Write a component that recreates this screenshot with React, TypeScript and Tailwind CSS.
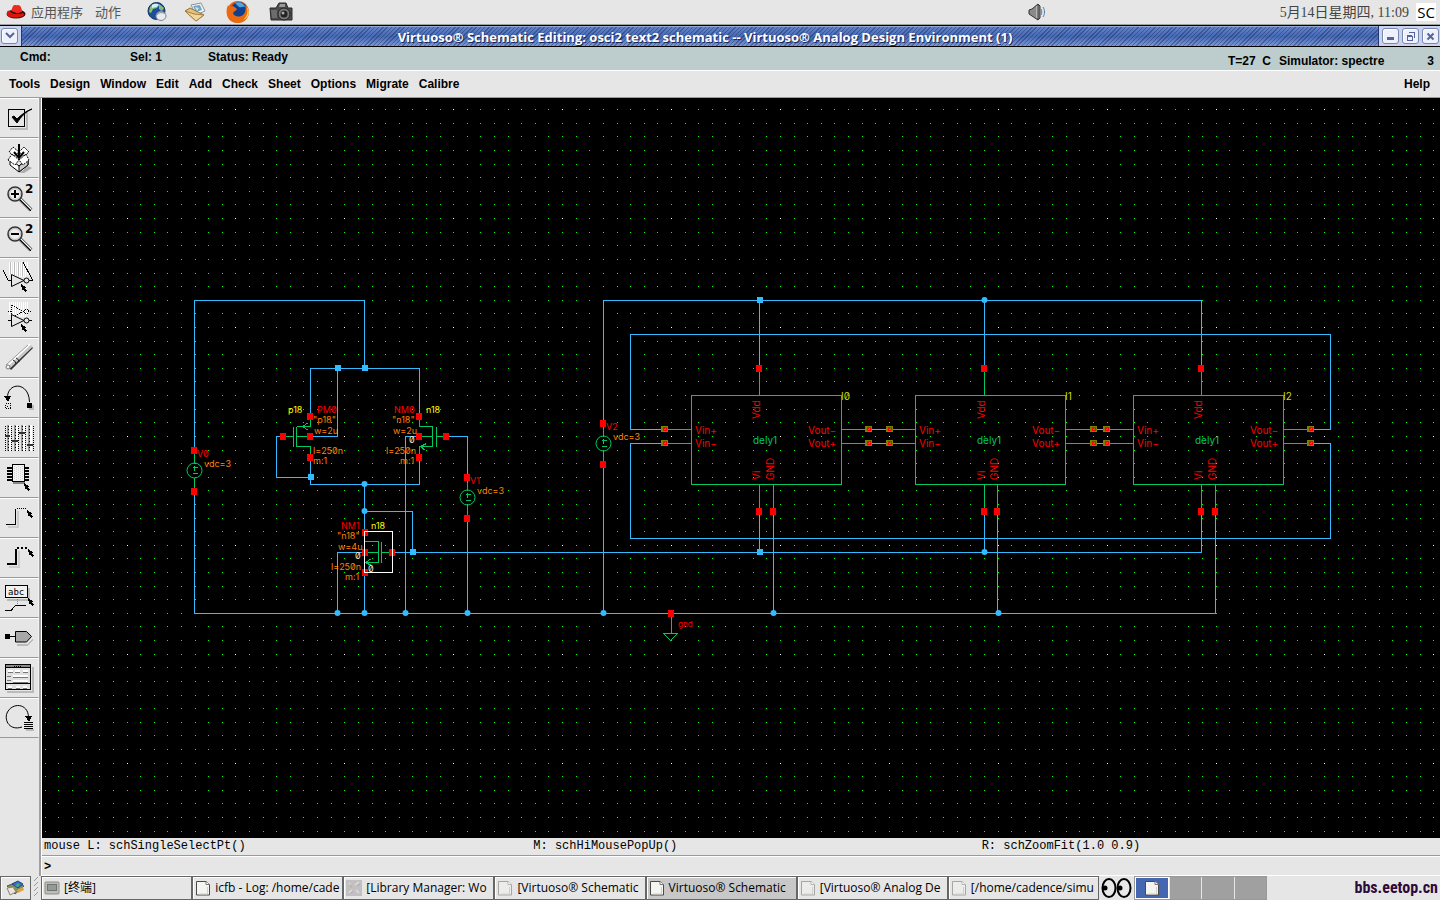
import type { ReactNode } from 'react'

const WIRE = '#33bbff'
const GREEN = '#00c864'
const RED = '#ff0000'
const ORANGE = '#ff8000'

const MENUS = ['Tools', 'Design', 'Window', 'Edit', 'Add', 'Check', 'Sheet', 'Options', 'Migrate', 'Calibre']

const TASKS = [
  { label: '[终端]', icon: 'terminal' },
  { label: 'icfb - Log: /home/cade', icon: 'page' },
  { label: '[Library Manager: Wo', icon: 'noise' },
  { label: '[Virtuoso® Schematic', icon: 'faded' },
  { label: 'Virtuoso® Schematic', icon: 'page', active: true },
  { label: '[Virtuoso® Analog De', icon: 'faded' },
  { label: '[/home/cadence/simu', icon: 'faded' },
]

export default function App() {
  return (
    <div className="flex h-screen flex-col overflow-hidden bg-[#e6e6e6] font-['Liberation_Sans',Arial,sans-serif] text-black">
      <DesktopPanel />
      <TitleBar />

      {/* Status line */}
      <div className="flex h-[23px] shrink-0 bg-[#bdcccc] pr-[6px] pl-5 text-[12px] leading-[20px] font-bold">
        <span className="w-[110px]">Cmd:</span>
        <span className="w-[78px]">Sel: 1</span>
        <span>Status: Ready</span>
        <div className="ml-auto flex pt-1">
          <span className="mr-2">T=27&nbsp; C</span>
          <span className="mr-[43px]">Simulator: spectre</span>
          <span>3</span>
        </div>
      </div>

      {/* Menu bar */}
      <nav className="flex h-7 shrink-0 items-center gap-[10px] border-t border-b border-t-white border-b-[#9a9a9a] pr-[10px] pl-[9px] text-[12px] font-bold">
        {MENUS.map((m) => (
          <button key={m}>{m}</button>
        ))}
        <button className="ml-auto">Help</button>
      </nav>

      <div className="flex min-h-0 flex-1">
        <aside className="w-[42px] shrink-0 border-r border-white">
          <div className="h-full border-r-2 border-[#a0a0a0]">
            {TOOLS.map((t) => (
              <button
                key={t.name}
                aria-label={t.name}
                className="block h-10 w-full border-t border-r border-b border-t-white border-r-[#f2f2f2] border-b-[#999]"
              >
                <svg width="38" height="38" viewBox="0 1 38 38" shapeRendering="crispEdges" fill="none" stroke="#000">
                  {t.art}
                </svg>
              </button>
            ))}
          </div>
        </aside>

        <main className="flex min-w-0 flex-1 flex-col">
          <div className="min-h-0 flex-1 overflow-hidden bg-black">
            <Schematic />
          </div>
          <div className="grid h-[18px] shrink-0 grid-cols-[490fr_449fr_459fr] border-b border-[#9a9a9a] pl-[2px] font-['Liberation_Mono','Courier_New',monospace] text-[12px] leading-[17px]">
            <span>mouse L: schSingleSelectPt()</span>
            <span>M: schHiMousePopUp()</span>
            <span>R: schZoomFit(1.0 0.9)</span>
          </div>
          <div className="h-5 shrink-0 border-t border-b border-white pl-[2px] font-['Liberation_Mono','Courier_New',monospace] text-[12px] leading-[20px] font-bold">
            &gt;
          </div>
        </main>
      </div>

      <Taskbar />
    </div>
  )
}

function DesktopPanel() {
  return (
    <header className="flex h-[25px] shrink-0 items-center border-b border-[#9ca39c] pr-1 pl-[6px] font-['Noto_Sans_CJK_SC',sans-serif] text-[13px] text-[#555]">
      <svg width="20" height="16" viewBox="0 0 20 16">
        <ellipse cx="10" cy="10" rx="9.5" ry="4.5" fill="#3a0605" />
        <path d="M1 8c1-2 3-1 4 0 3 2 8 3 11 1 2 0 3 2 1 3-5 3-14 2-16-1z" fill="#d9150e" />
        <path d="M5 7l2-5c2-2 3 0 5-1 3 0 4 4 4 7-3 2-8 1-11-1z" fill="#ee2a20" />
        <path d="M5 7c3 2 8 3 11 1v1c-4 2-9 1-11-1z" fill="#111" />
      </svg>
      <button className="ml-[5px]">应用程序</button>
      <button className="ml-3">动作</button>
      <button aria-label="Web browser" className="ml-[26px]">
        <svg width="20" height="20" viewBox="0 0 20 20">
          <circle cx="9.500" cy="9" r="8.500" fill="#1d4e9a" stroke="#17325f" />
          <path d="M3 5c3-4 7-4 9-2l-2 3-4 1-2 4-2-1zM12 2l5 4-2 3-3-2z" fill="#8ac46a" />
          <path d="M5 3c3-2 6-1 7 0L9 5 5 6z" fill="#d6efff" />
          <ellipse cx="14" cy="14" rx="5" ry="4.500" fill="#e8eaf0" stroke="#7d8594" />
          <path d="M10 13c2-3 6-3 8-1M14 10V6" stroke="#8b93a3" fill="none" />
        </svg>
      </button>
      <button aria-label="Mail" className="ml-[17px]">
        <svg width="22" height="20" viewBox="0 0 22 20">
          <path d="M7 3l10-2 4 8-9 4z" fill="#f2f4f4" stroke="#8b9298" />
          <path d="M9 4l7-1 2 5-6 2z" fill="#6fa5c9" />
          <path d="M11 5l4 1-2 3z" fill="#cfe6d8" />
          <path d="M1 9l5-3 14 7-8 6z" fill="#e6c07c" stroke="#96703a" />
          <path d="M1 9l9 3 10 1-8 6z" fill="#f2d79c" stroke="#a5803f" />
        </svg>
      </button>
      <button aria-label="Firefox" className="ml-[20px]">
        <svg width="24" height="24" viewBox="0 0 24 24">
          <circle cx="12" cy="12" r="11" fill="#e2600c" />
          <circle cx="13" cy="10" r="8" fill="#123f8c" />
          <path d="M9 3c4-2 9 0 10 4-3-1-3 1-6 0z" fill="#4fa6dd" />
          <path d="M2 5c1 2 3 2 5 1l4 3c-1 2-3 2-4 4 1 4 7 5 11 1 2-3 2-6 1-9 4 4 5 11 0 15-5 4-13 4-17-2-2-4-2-9 0-13z" fill="#ea6a14" />
          <path d="M20 6c3 5 1 11-3 14 6-2 8-9 3-14z" fill="#ffd84a" />
        </svg>
      </button>
      <button aria-label="Screenshot" className="ml-[19px]">
        <svg width="24" height="20" viewBox="0 0 24 20">
          <path d="M1 6h6l3-5h7l2 5h4v12H2z" fill="#4b4b4b" stroke="#2a2a2a" />
          <path d="M11 2h5v3h-6z" fill="#999" />
          <path d="M2 8h6v8H3z" fill="#6c6c6c" />
          <circle cx="15" cy="12" r="6" fill="#777" stroke="#222" />
          <circle cx="15" cy="12" r="3.500" fill="#222" />
          <circle cx="14" cy="11" r="1.500" fill="#aaa" />
        </svg>
      </button>
      <button aria-label="Volume" className="mr-[234px] ml-auto">
        <svg width="18" height="18" viewBox="0 0 18 18" fill="none">
          <path d="M1 7l3-1 6-5 2 2v12l-2 2-6-4-3-2z" fill="#8a8a8a" stroke="#333" />
          <path d="M9 3v12" stroke="#ddd" />
          <path d="M10 2v14" stroke="#444" />
          <path d="M13 6c1 2 1 4 0 6M15 4c2 3 2 7 0 10" stroke="#4d7fae" />
        </svg>
      </button>
      <span className="font-['Liberation_Serif','Noto_Sans_CJK_SC',serif] text-[14px] whitespace-nowrap text-[#444]">
        5月14日星期四, 11:09
      </span>
      <button className="ml-[7px] h-[18px] w-5 bg-white font-['Open_Sans',sans-serif] text-[15px] leading-[18px] text-black">SC</button>
    </header>
  )
}

function TitleBar() {
  const box =
    'flex h-4 w-[17px] items-center justify-center rounded-[3px] border border-[#7986b0] bg-[#eef1fb] shadow-[inset_1px_1px_0_#fff]'
  return (
    <div className="flex h-[22px] shrink-0 border-t border-b border-black bg-[#c9d3ee]">
      <div className="flex w-[22px] items-center border-r border-[#26366e] pl-px">
        <button aria-label="Window menu" className={box}>
          <svg width="10" height="8" viewBox="0 0 10 8">
            <path d="M1 1l4 4 4-4" fill="none" stroke="#55659b" strokeWidth="2" />
          </svg>
        </button>
      </div>
      <h1 className="flex-1 truncate border-t border-[#93a9dc] bg-[repeating-linear-gradient(135deg,rgba(20,36,90,0.4)_0px,rgba(20,36,90,0.4)_1px,transparent_1px,transparent_3px),linear-gradient(#6483c8,#4669b4_50%,#7c98d4)] pl-[10px] text-center font-['Open_Sans','Noto_Sans',sans-serif] text-[13px] leading-[20px] font-bold text-white [text-shadow:1px_1px_0_#1b2855]">
        Virtuoso® Schematic Editing: osci2 text2 schematic -- Virtuoso® Analog Design Environment (1)
      </h1>
      <div className="flex items-center gap-[3px] border-l border-[#26366e] pr-px pl-[3px]">
        <button aria-label="Minimize" className={box}>
          <svg width="9" height="9" viewBox="0 0 9 9" shapeRendering="crispEdges">
            <path d="M1 5h7v3H1z" fill="#55659b" />
          </svg>
        </button>
        <button aria-label="Restore" className={box}>
          <svg width="9" height="9" viewBox="0 0 9 9" shapeRendering="crispEdges" fill="none" stroke="#55659b">
            <path d="M3 .5h5.500V6M1 4.500h5v4H1zM1 3.500h5" />
          </svg>
        </button>
        <button aria-label="Close" className={box}>
          <svg width="9" height="9" viewBox="0 0 9 9">
            <path d="M1.500 1.500l6 6m0-6l-6 6" stroke="#55659b" strokeWidth="2" />
          </svg>
        </button>
      </div>
    </div>
  )
}

/* ---------- toolbar ---------- */

function Cursor({ x, y }: { x: number; y: number }) {
  return <path transform={`translate(${x} ${y})`} d="M0 0l5 3-1 1 2 3-2 1-2-3-1 1z" fill="#000" stroke="none" />
}

function Lens({ plus }: { plus?: boolean }) {
  return (
    <g shapeRendering="auto">
      <path d="M20 21l11 11" stroke="#777" strokeWidth="4" />
      <path d="M20 22l11 11" stroke="#000" strokeWidth="1" />
      <path d="M21 21l10 10" stroke="#fff" strokeWidth="1" />
      <circle cx="15" cy="16" r="7" fill="#eee" stroke="#333" strokeWidth="1.500" />
      <circle cx="15" cy="16" r="5.500" stroke="#bbb" />
      <path d={plus ? 'M11 16h8M15 12v8' : 'M11 16h8'} strokeWidth="2" />
      <text x="25" y="15" stroke="none" fill="#000" className="font-['DejaVu_Sans',sans-serif] text-[12px] font-bold">
        2
      </text>
    </g>
  )
}

const STRIPES = 'M9.500 4v13M11.500 4v12M13.500 4v13M15.500 4v14M17.500 4v14M19.500 4v15M21.500 4v15M23.500 4v15M25.500 4v15M27.500 4v13'

const TOOLS: { name: string; art: ReactNode }[] = [
  {
    name: 'Check and Save',
    art: (
      <>
        <path d="M10 30.500h17V14" stroke="#bbb" strokeWidth="2" />
        <rect x="8.500" y="11.500" width="16" height="17" />
        <path d="M8 11.500h17M8.500 11v18" />
        <path d="M12 19l5 6c4-6 8-11 15-14-6 2-11 6-15 10l-3-3z" fill="#000" shapeRendering="auto" />
      </>
    ),
  },
  {
    name: 'Save',
    art: (
      <g shapeRendering="auto">
        <path d="M20 35l8-7 4 2-8 5z" fill="#aaa" stroke="none" />
        <path d="M10 21l9 7 9-7v6l-9 7-9-7z" fill="#fff" />
        <path d="M19 28l9-7v6l-9 7z" fill="#ccc" />
        <path d="M8 22l4-6 7 6-4 5zM19 22l7-6 3 6-6 5zM9 14l4-5 6 5-5 4zM19 14l5-5 5 5-5 4z" fill="#fff" strokeDasharray="2 1" />
        <path d="M19 6v13" strokeWidth="2" />
        <path d="M14 14l5 6 5-6" strokeWidth="2" />
      </g>
    ),
  },
  { name: 'Zoom In', art: <Lens plus /> },
  { name: 'Zoom Out', art: <Lens /> },
  {
    name: 'Stretch',
    art: (
      <>
        <path d={STRIPES} stroke="#fff" />
        <path d="M10.500 4v12M14.500 4v13M18.500 4v14M22.500 4v14" stroke="#bbb" />
        <path d="M3 12l5 10h3M23 4l9 17v1h-3" />
        <path d="M11.500 16.500v12L24 22.500z" fill="#e6e6e6" strokeWidth="1" shapeRendering="auto" />
        <circle cx="26.500" cy="22.500" r="2.500" shapeRendering="auto" fill="#e6e6e6" />
        <Cursor x={21} y={26} />
      </>
    ),
  },
  {
    name: 'Copy',
    art: (
      <>
        <path d={STRIPES} stroke="#fff" />
        <path d="M8 13h4M11.500 7v12L24 13.500zM28 13h4" strokeDasharray="1 1" />
        <circle cx="26.500" cy="13.500" r="2.500" strokeDasharray="1 1" />
        <path d="M8 22h3M29 22h3" />
        <path d="M11.500 16.500v12L24 22.500z" fill="#e6e6e6" shapeRendering="auto" />
        <circle cx="26.500" cy="22.500" r="2.500" shapeRendering="auto" fill="#e6e6e6" />
        <Cursor x={21} y={26} />
      </>
    ),
  },
  {
    name: 'Delete',
    art: (
      <g shapeRendering="auto">
        <path d="M10 31L32 9" stroke="#333" strokeWidth="3" />
        <path d="M8 29L31 7" stroke="#c8c8c8" strokeWidth="5" />
        <path d="M8 27L30 6" stroke="#fff" strokeWidth="2" />
        <path d="M6 27L28 7" stroke="#999" />
        <path d="M13 22q3 1 3 4M16 20q3 1 3 4" stroke="#222" />
        <circle cx="8" cy="29" r="2" fill="#f4f4f4" stroke="#777" />
      </g>
    ),
  },
  {
    name: 'Undo',
    art: (
      <>
        <path d="M7.500 20C7 4 29 3 29.500 24" shapeRendering="auto" />
        <path d="M4 18h7l-3 6z" fill="#000" stroke="none" />
        <rect x="5.500" y="25.500" width="5" height="5" strokeDasharray="1 1" />
        <path d="M7 28h2" strokeDasharray="1 1" />
        <rect x="29" y="27" width="5" height="5" fill="#bbb" stroke="none" />
        <rect x="27" y="25" width="5" height="5" fill="#000" stroke="none" />
      </>
    ),
  },
  {
    name: 'Property',
    art: (
      <>
        <path d="M9.500 7v26M16.500 7v26M23.500 7v26M30.500 7v26" stroke="#fff" strokeWidth="2" />
        <path d="M7.500 7v26M14.500 7v26M21.500 7v26M28.500 7v26" stroke="#999" strokeWidth="2" />
        <path d="M5.500 8v25M11.500 8v25M18.500 8v25M25.500 8v25M33.500 8v25" strokeDasharray="1 1" />
        <path d="M8.500 8v25M15.500 8v25M22.500 8v25M29.500 8v25" strokeDasharray="1 2" />
        <path d="M5 18h5M12 23h6M19 15h6M27 27h6" strokeWidth="2" stroke="#333" />
      </>
    ),
  },
  {
    name: 'Instance',
    art: (
      <>
        <path d="M7 9.500h5M7 12.500h5M7 15.500h5M7 18.500h5M7 21.500h5M25 9.500h4M25 12.500h4M25 15.500h4M25 18.500h4M25 21.500h4" strokeWidth="2" />
        <rect x="12.500" y="6.500" width="12" height="17" fill="#f4f4f4" />
        <path d="M14.500 8v14M16.500 9v13M18.500 8v14M20.500 9v13M22.500 8v14" stroke="#d4d4d4" strokeDasharray="1 1" />
        <path d="M13 24.500h12" stroke="#888" strokeWidth="2" />
        <Cursor x={24} y={25} />
      </>
    ),
  },
  {
    name: 'Wire Narrow',
    art: (
      <>
        <path d="M8 28.500h10V13" stroke="#ccc" strokeWidth="2" />
        <path d="M6 26.500h9.500V11" />
        <path d="M17 10.500h10" strokeDasharray="1 1" />
        <Cursor x={27} y={12} />
      </>
    ),
  },
  {
    name: 'Wire Wide',
    art: (
      <>
        <path d="M9 28.500h10V13" stroke="#ccc" strokeWidth="2" />
        <path d="M7 26h9V11" strokeWidth="2" />
        <path d="M17 10h11" strokeWidth="2" strokeDasharray="2 2" />
        <Cursor x={28} y={11} />
      </>
    ),
  },
  {
    name: 'Wire Name',
    art: (
      <>
        <path d="M7 21.500h22V10" stroke="#bbb" strokeWidth="2" />
        <rect x="5.500" y="7.500" width="22" height="12" fill="#f0f0f0" />
        <text x="8" y="17" stroke="none" fill="#000" className="font-['DejaVu_Sans_Mono',monospace] text-[9px]">
          abc
        </text>
        <path d="M17.500 21v5" stroke="#888" strokeDasharray="1 1" />
        <path d="M5 32.500h6l5-5.500h10" />
        <Cursor x={28} y={20} />
      </>
    ),
  },
  {
    name: 'Pin',
    art: (
      <>
        <path d="M17 26.500h11l5-5" stroke="#bbb" strokeWidth="2" />
        <rect x="5" y="16" width="5" height="5" fill="#000" stroke="none" />
        <path d="M10 18.500h5" />
        <path d="M15.500 13.500h11l5 5-5 5.500h-11z" fill="#a8a8a8" shapeRendering="auto" />
      </>
    ),
  },
  {
    name: 'Cmd Options',
    art: (
      <>
        <path d="M7 33.500h26V9" stroke="#bbb" strokeWidth="2" />
        <rect x="5.500" y="6.500" width="25" height="25" fill="#e0e0e0" />
        <path d="M6 8h24" stroke="#888" strokeWidth="2" />
        <path d="M14 8h7" strokeDasharray="1 1" />
        <path d="M6 9.500h24M6 25.500h24" />
        <path d="M8 12.500h5M15 12.500h5M23 12.500h5M13 17.500h15M13 22.500h15M8 28.500h4M16 28.500h4M23 28.500h4" stroke="#fff" strokeWidth="2" />
        <path d="M8 14.500h5M15 14.500h5M23 14.500h5M13 19.500h15M13 24.500h15M8 30.500h4M16 30.500h4M23 30.500h4M7 18.500h4M7 22.500h4" stroke="#777" />
      </>
    ),
  },
  {
    name: 'Repeat',
    art: (
      <>
        <path d="M22 29C10 33 4 23 7 15 12 4 28 5 28.500 19" shapeRendering="auto" />
        <path d="M25 18h7l-3 6z" fill="#000" stroke="none" />
        <path d="M26 31.500h8" stroke="#bbb" strokeWidth="2" />
        <path d="M24 24.500h9M24 26.500h9M24 28.500h9M24 30.500h9" />
      </>
    ),
  },
]

/* ---------- schematic ---------- */

const PITCH = 13.6125

function gridPath(major: boolean) {
  let d = ''
  for (let i = -14; i < 160; i++) {
    for (let j = -16; j < 80; j++) {
      if ((i % 8 === 0 && j % 8 === 0) !== major) continue
      d += `M${Math.round(235.4 + PITCH * i)} ${Math.round(327 + PITCH * j)}h1v1h-1z`
    }
  }
  return d
}

const MINOR_DOTS = gridPath(false)
const MAJOR_DOTS = gridPath(true)

const WIRES = [
  'M194 450V300H364V368M310 416V368H419V416M337 368V436H310M283 436H276V477H310M310 457V484H419V457',
  'M419 436H405V613M446 436H467V477M467 518V613M364 484V532M364 511H412V552M392 552H1201M364 552H337V613M364 572V613',
  'M194 491V613H1215M603 423V300H1201V368M603 463V613',
  'M664 429H630V334H1330V429H1310M664 443H630V538H1330V443H1310',
  'M759 300V368M984 300V368M759 511V552M984 511V552M1201 511V552M773 511V613M997 511V613M1215 511V613',
  'M868 429H889M868 443H889M1093 429H1106M1093 443H1106',
]

const SQUARE_NODES = [[337, 368], [364, 368], [310, 477], [412, 552], [759, 300], [759, 552]]
const ROUND_NODES = [
  [364, 484], [364, 511], [337, 613], [364, 613], [405, 613], [467, 613], [603, 613], [773, 613], [998, 613],
  [984, 300], [984, 552],
]

function Pins({ at }: { at: number[][] }) {
  return (
    <>
      {at.map(([x, y]) => (
        <rect key={`${x}-${y}`} x={x - 3} y={y - 3} width="6" height="7" fill={RED} />
      ))}
    </>
  )
}

function Label({ x, y, fill, children }: { x: number; y: number; fill: string; children: string }) {
  return (
    <text x={x} y={y} fill={fill} className="text-[9px]">
      {children}
    </text>
  )
}

function Source({ x, y, name }: { x: number; y: number; name: string }) {
  return (
    <>
      <g fill="none" stroke={GREEN} transform="translate(.5 .5)">
        <path d={`M${x} ${y - 20}v13M${x} ${y + 7}v14M${x - 2} ${y - 3}h5M${x} ${y - 5}v5M${x - 2} ${y + 3}h5`} />
        <circle cx={x} cy={y} r="7.500" shapeRendering="auto" />
      </g>
      <Pins at={[[x, y - 20], [x, y + 21]]} />
      <Label x={x + 3} y={y - 13} fill={RED}>{name}</Label>
      <Label x={x + 10} y={y - 3} fill={ORANGE}>vdc=3</Label>
    </>
  )
}

function PortPin({ x, y }: { x: number; y: number }) {
  return (
    <>
      <rect x={x - 3} y={y - 3} width="7" height="6" fill="#808000" />
      <path d={`M${x - 1} ${y - 2}h3v3h-3zM${x} ${y - 1}l1 1`} fill="none" stroke={RED} transform="translate(.5 .5)" />
    </>
  )
}

function Delay({ x, name, vdd, gnd, inputX, outputX }: { x: number; name: string; vdd: number; gnd: number; inputX: number; outputX: number }) {
  return (
    <>
      <path
        d={`M${x} 395h150v89h-150zM${vdd} 368V395M${vdd} 484V511M${gnd} 484V511M${inputX} 429H${x}M${inputX} 443H${x}M${x + 150} 429H${outputX}M${x + 150} 443H${outputX}`}
        fill="none"
        stroke={GREEN}
        transform="translate(.5 .5)"
      />
      <Pins at={[[vdd, 368], [vdd, 511], [gnd, 511]]} />
      {[429, 443].map((y) => (
        <g key={y}>
          <PortPin x={inputX} y={y} />
          <PortPin x={outputX} y={y} />
        </g>
      ))}
      <g fill={RED} className="text-[10px]">
        <text x={x + 4} y="434">Vin+</text>
        <text x={x + 4} y="447">Vin−</text>
        <text x={x + 145} y="434" textAnchor="end">Vout−</text>
        <text x={x + 145} y="447" textAnchor="end">Vout+</text>
        <text transform={`translate(${vdd + 1} 419) rotate(-90)`}>Vdd</text>
        <text transform={`translate(${vdd + 1} 480) rotate(-90)`}>Vi</text>
        <text transform={`translate(${gnd + 1} 480) rotate(-90)`}>GND</text>
      </g>
      <text x={x + 62} y="444" fill={GREEN} className="text-[10px]">dely1</text>
      <text x={x + 150} y="400" fill="#d8d800" className="text-[10px]">{name}</text>
    </>
  )
}

function Schematic() {
  return (
    <svg className="block h-full w-full font-['Inter','Liberation_Sans',sans-serif] slashed-zero" shapeRendering="crispEdges">
      <g transform="translate(-42 -98)">
        <path d={MINOR_DOTS} fill="#00ff00" />
        <path d={MAJOR_DOTS} fill="#fff" />

        <path d={WIRES.join('')} fill="none" stroke={WIRE} transform="translate(.5 .5)" />

        {/* MOS bodies */}
        <g fill="none" stroke={GREEN} transform="translate(.5 .5)">
          <path d="M283 436H293M293 426V446M296 426V446M310 416V426H296M296 436H310M296 446H310V457M308 422L302 426L308 430" />
          <path d="M446 436H436M436 426V446M432 426V446M419 416V426H432M432 436H419M432 446H419V457M426 443L420 446L425 450" />
          <path d="M392 552H381M381 541V562M378 541V562M364 532V541H378M378 552H364M378 562H364V572M371 558L365 562L371 565" />
        </g>
        <Pins
          at={[
            [310, 416], [310, 436], [310, 457], [283, 436],
            [419, 416], [419, 436], [419, 457], [446, 436],
            [365, 532], [365, 552], [365, 572], [392, 552],
          ]}
        />
        <rect x="364.500" y="531.500" width="28" height="41" fill="none" stroke="#fff" />

        {SQUARE_NODES.map(([x, y]) => (
          <rect key={`${x}-${y}`} x={x - 2} y={y - 3} width="6" height="6" fill={WIRE} />
        ))}
        {ROUND_NODES.map(([x, y]) => (
          <circle key={`${x}-${y}`} cx={x + 0.5} cy={y} r="3" fill={WIRE} shapeRendering="auto" />
        ))}

        <Source x={194} y={470} name="V0" />
        <Source x={467} y={497} name="V1" />
        <Source x={603} y={443} name="V2" />

        <Label x={288} y={413} fill="#ffff00">p18</Label>
        <Label x={317} y={413} fill={RED}>PM0</Label>
        <Label x={313} y={423} fill={ORANGE}>"p18"</Label>
        <Label x={314} y={434} fill={ORANGE}>w=2u</Label>
        <Label x={313} y={454} fill={ORANGE}>l=250n</Label>
        <Label x={313} y={464} fill={ORANGE}>m:1</Label>

        <Label x={394} y={413} fill={RED}>NM0</Label>
        <Label x={426} y={413} fill="#ffff00">n18</Label>
        <Label x={392} y={423} fill={ORANGE}>"n18"</Label>
        <Label x={393} y={434} fill={ORANGE}>w=2u</Label>
        <Label x={409} y={443} fill="#ffe8c8">0</Label>
        <Label x={386} y={454} fill={ORANGE}>l=250n</Label>
        <Label x={400} y={464} fill={ORANGE}>m:1</Label>

        <Label x={341} y={529} fill={RED}>NM1</Label>
        <Label x={371} y={529} fill="#ffff00">n18</Label>
        <Label x={337} y={539} fill={ORANGE}>"n18"</Label>
        <Label x={338} y={550} fill={ORANGE}>w=4u</Label>
        <Label x={355} y={559} fill="#ffe8c8">0</Label>
        <Label x={331} y={570} fill={ORANGE}>l=250n</Label>
        <Label x={368} y={572} fill="#ffe8c8">0</Label>
        <Label x={345} y={580} fill={ORANGE}>m:1</Label>

        <Delay x={691} name="I0" vdd={759} gnd={773} inputX={664} outputX={868} />
        <Delay x={915} name="I1" vdd={984} gnd={997} inputX={889} outputX={1093} />
        <Delay x={1133} name="I2" vdd={1201} gnd={1215} inputX={1106} outputX={1310} />

        <path d="M671 613V633M663 633H677L670 640Z" fill="none" stroke={GREEN} transform="translate(.5 .5)" />
        <Pins at={[[671, 613]]} />
        <text x="678" y="627" fill={RED} className="text-[8px]">gnd</text>
      </g>
    </svg>
  )
}

/* ---------- bottom panel ---------- */

function TaskIcon({ kind }: { kind: string }) {
  if (kind === 'terminal') {
    return (
      <svg width="16" height="16" viewBox="0 0 16 16" className="shrink-0">
        <rect x="1" y="2" width="14" height="12" rx="1" fill="#bdbdb8" stroke="#8c8c88" />
        <rect x="3.500" y="4.500" width="9" height="6" fill="#969a96" stroke="#6f736f" />
      </svg>
    )
  }
  if (kind === 'noise') {
    return (
      <svg width="16" height="16" viewBox="0 0 16 16" className="shrink-0">
        <path d="M0 0h16v16H0z" fill="#c2c0c0" />
        <path d="M3 13l3-3M9 5l4-3M10 10l3 3M3 3l1 1" stroke="#d8d6d6" strokeWidth="2" />
        <path d="M4 14l3-3M11 6l3-2M4 6l2 1" stroke="#b0a8a8" />
      </svg>
    )
  }
  const faded = kind === 'faded'
  return (
    <svg width="16" height="16" viewBox="0 0 16 16" className="shrink-0">
      <path d="M1.500 1.500h9.500l3.500 3v10.500h-13z" fill={faded ? '#ececea' : '#f4f4f0'} stroke={faded ? '#a6a6a6' : '#4a4a4a'} />
      <path d="M11 1.500v3h3.500" fill="#fff" stroke={faded ? '#b5b5b5' : '#777'} />
      <path d="M12.500 7v7H4" fill="none" stroke="#d0d0cc" />
    </svg>
  )
}

function Taskbar() {
  return (
    <footer className="flex h-[24px] shrink-0 items-stretch font-['Open_Sans','Noto_Sans_CJK_SC',sans-serif] text-[12px]">
      <button
        aria-label="Show desktop"
        className="flex w-[31px] shrink-0 items-center justify-center border border-[#666] shadow-[inset_1px_1px_0_#fff]"
      >
        <svg width="20" height="16" viewBox="0 0 20 16">
          <path d="M1 6l10-4 7 4-9 8z" fill="#8d8a60" stroke="#5c5b48" />
          <path d="M6 4l6-3 5 3-5 4z" fill="#2f6fd0" stroke="#28457b" />
          <path d="M9 6l3-3 2 2-2 2z" fill="#35b36e" />
          <path d="M1 8l6-1 3 5-6 3z" fill="#e8e4d8" stroke="#8a8578" />
          <path d="M11 10l6-3 1 3-6 3z" fill="#d9a34c" />
        </svg>
      </button>
      <svg width="10" height="24" viewBox="0 0 10 24" className="shrink-0" stroke="#999">
        <path d="M3 5l4-4M3 10l4-4M3 15l4-4M3 20l4-4" />
      </svg>
      <div className="flex max-w-[1058px] min-w-0 flex-1">
        {TASKS.map((t) => (
          <button
            key={t.label}
            className={`flex min-w-0 flex-1 items-center gap-1 overflow-hidden border border-[#666] pl-[2px] text-left whitespace-nowrap shadow-[inset_1px_1px_0_#fff] ${t.active ? 'bg-[#c8c8c8]' : 'bg-[#e6e6e6]'}`}
          >
            <TaskIcon kind={t.icon} />
            {t.label}
          </button>
        ))}
      </div>
      <svg width="34" height="24" viewBox="0 0 34 24" className="ml-[1px] shrink-0">
        <ellipse cx="9" cy="12" rx="6.500" ry="9" fill="#e8e8e8" stroke="#000" strokeWidth="2" />
        <ellipse cx="24" cy="12" rx="6.500" ry="9" fill="#e8e8e8" stroke="#000" strokeWidth="2" />
        <circle cx="5" cy="12" r="2.500" />
        <circle cx="20" cy="12" r="2.500" />
      </svg>
      <div className="flex w-[133px] shrink-0 gap-px border border-[#999] bg-[#e6e6e6]">
        <button aria-label="Workspace 1" className="flex flex-1 items-center justify-center border border-white bg-[#4566b0]">
          <TaskIcon kind="page" />
        </button>
        <button aria-label="Workspace 2" className="flex-1 bg-[#a0a0a0]" />
        <button aria-label="Workspace 3" className="flex-1 bg-[#a0a0a0]" />
        <button aria-label="Workspace 4" className="flex-1 bg-[#a0a0a0]" />
      </div>
      <span className="mr-[2px] ml-auto font-['Liberation_Sans_Narrow','Roboto_Condensed','Liberation_Sans',sans-serif] text-[16px] leading-[23px] font-bold text-[#2d0a3c]">
        bbs.eetop.cn
      </span>
    </footer>
  )
}
